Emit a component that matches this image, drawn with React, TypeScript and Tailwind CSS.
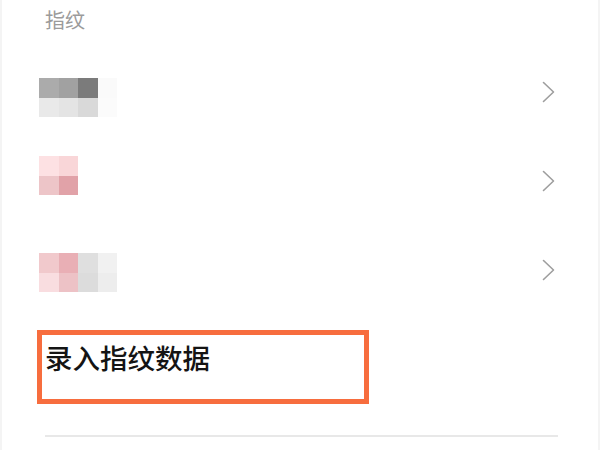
import React from 'react';

type Cell = string;

const rows: { cells: Cell[][]; blockTop: string; chevTop: string; height: string }[] = [
  {
    cells: [
      ['#ababab', '#a1a1a1', '#7b7b7b', '#fafafa'],
      ['#e9e9e9', '#e4e4e4', '#d9d9d9', '#fbfbfb'],
    ],
    blockTop: 'mt-[18px]',
    chevTop: 'mt-[21px]',
    height: 'h-[80px]',
  },
  {
    cells: [
      ['#fde1e3', '#f9d6d8'],
      ['#edc5c8', '#e1a2a8'],
    ],
    blockTop: 'mt-[16px]',
    chevTop: 'mt-[30px]',
    height: 'h-[97px]',
  },
  {
    cells: [
      ['#f1c9cc', '#e9afb5', '#dfdfdf', '#f1f1f1'],
      ['#f9dde0', '#edc2c6', '#dcdcdc', '#ededed'],
    ],
    blockTop: 'mt-[16px]',
    chevTop: 'mt-[22px]',
    height: 'h-[93px]',
  },
];

function Chevron() {
  return (
    <svg width="13" height="22" viewBox="0 0 13 22" fill="none">
      <polyline points="1.5,1.5 11.5,11 1.5,20.5" stroke="#9e9e9e" strokeWidth="1.6" strokeLinecap="round" strokeLinejoin="round" />
    </svg>
  );
}

function Pixelated({ cells }: { cells: Cell[][] }) {
  return (
    <div className="flex flex-col">
      {cells.map((line, i) => (
        <div key={i} className="flex">
          {line.map((c, j) => (
            <div key={j} className="w-[19.5px] h-[19.5px]" style={{ backgroundColor: c }} />
          ))}
        </div>
      ))}
    </div>
  );
}

export default function App() {
  return (
    <div
      className="w-[600px] h-[450px] bg-white overflow-hidden border-l-2 border-r-2 border-[#f4f4f4] flex flex-col"
      style={{ fontFamily: '"Noto Sans CJK SC", "Noto Sans", sans-serif' }}
    >
      {/* 标题 */}
      <div className="h-[60px] pl-[43px] pt-[6px]">
        <p className="text-[20px] leading-[28px] text-[#9b9b9b]">指纹</p>
      </div>

      {/* 已录入的指纹 */}
      {rows.map((r, i) => (
        <div key={i} className={`${r.height} flex items-start justify-between pl-[37px] pr-[43px]`}>
          <div className={r.blockTop}>
            <Pixelated cells={r.cells} />
          </div>
          <div className={r.chevTop}>
            <Chevron />
          </div>
        </div>
      ))}

      {/* 录入 */}
      <div className="pl-[35px]">
        <div className="w-[332px] h-[74px] border-[5px] border-[#f76d3e] pl-[3px] pt-[6px]">
          <p className="text-[27.5px] leading-[32px] font-medium text-[#141414]">录入指纹数据</p>
        </div>
      </div>

      <div className="ml-[43px] mt-[31px] w-[513px] h-[2px] bg-[#e8e8e8]" />
    </div>
  );
}
